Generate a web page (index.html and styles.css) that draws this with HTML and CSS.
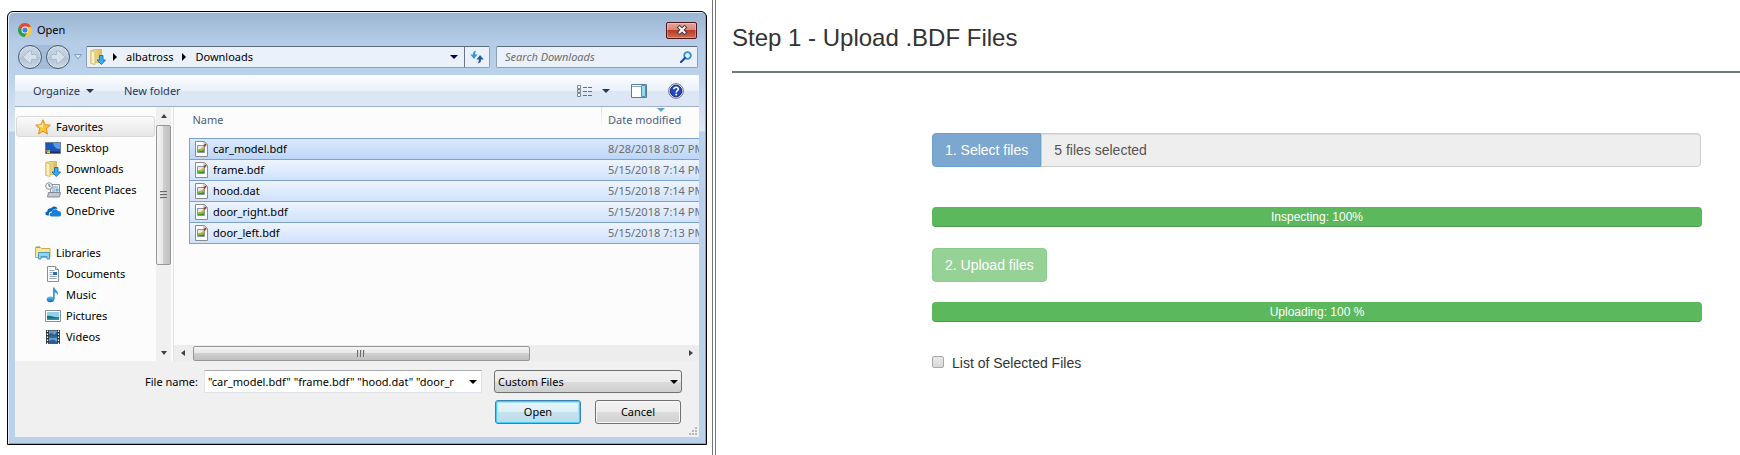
FILE: index.html
```html
<!DOCTYPE html>
<html lang="en">
<head>
  <meta charset="UTF-8">
  <meta name="viewport" content="width=device-width, initial-scale=1.0">
  <title>Upload .BDF Files</title>
  <link rel="stylesheet" href="styles.css">
</head>
<body>
  <!-- shared icons -->
  <svg class="sprite" aria-hidden="true">
    <defs>
      <linearGradient id="gold" x1="0" y1="0" x2="1" y2="0">
        <stop offset="0" stop-color="#f9ecab"/><stop offset="1" stop-color="#dcb95b"/>
      </linearGradient>
      <linearGradient id="sky" x1="0" y1="0" x2="0" y2="1">
        <stop offset="0" stop-color="#5cc4f7"/><stop offset="1" stop-color="#1469b5"/>
      </linearGradient>
      <symbol id="icon-downloads" viewBox="0 0 16 16">
        <path d="M1 1.5 5 .5h6.500v13H5l-4 1z" fill="url(#gold)" stroke="#d3b15a" stroke-width=".8"/>
        <path d="M1 1.500 5 3v12.500l-4-1z" fill="#fbf1bd" stroke="#d3b15a" stroke-width=".8"/>
        <path d="M9.500 6.500h3.500v4.500h2.500l-4.200 4.500L7 11h2.500z" fill="#36aef0" stroke="#176bb0" stroke-width=".9"/>
      </symbol>
      <symbol id="icon-file" viewBox="0 0 13 16">
        <path d="M.5.5h9l3 3v12H.5z" fill="#fdfdfd" stroke="#8b8b8b"/>
        <path d="M9 .5v3.500h3.500" fill="#e4e4e4" stroke="#9a9a9a" stroke-width=".8"/>
        <path d="M2.500 4.500h7v7h-7z" fill="#dfe9ee" stroke="#8796a0"/>
        <path d="M3 8.500 9 7v4H3z" fill="#6bbf3a"/>
        <path d="M3 11h6v-1.500l-4 .5z" fill="#2f8f2a"/>
        <path d="M5.500 9.500 10 5" stroke="#e9a824" stroke-width="1.500"/>
        <path d="M9 5.500 11 3" stroke="#a12a2a" stroke-width="1.500"/>
      </symbol>
      <symbol id="icon-down" viewBox="0 0 8 4"><path d="M0 0h8L4 4z" fill="currentColor"/></symbol>
    </defs>
  </svg>

  <div class="layout">
    <div class="dialog-pane">
      <section class="dialog" aria-label="Open">
        <header class="title-bar">
          <svg class="chrome" viewBox="0 0 14 14">
            <circle cx="7" cy="7" r="7" fill="#fbc935"/>
            <path d="M7 7 .9 3.500A7 7 0 0 0 6.500 14L10 8.700z" fill="#24a05a"/>
            <path d="M7 7 3.900 8.800.9 3.500A7 7 0 0 1 13.100 3.700H7z" fill="#de4b3c"/>
            <circle cx="7" cy="7" r="3.500" fill="#f4f6fa"/>
            <circle cx="7" cy="7" r="2.600" fill="#3f80ea"/>
          </svg>
          <span class="title-text">Open</span>
          <button class="close-button" aria-label="Close">
            <svg width="12" height="10" viewBox="0 0 12 10"><path d="M3.500 2.500l5 5M8.500 2.500l-5 5" stroke="#4c3a42" stroke-width="4" stroke-linecap="square"/><path d="M3.500 2.500l5 5M8.500 2.500l-5 5" stroke="#f5f5f5" stroke-width="2" stroke-linecap="square"/></svg>
          </button>
        </header>

        <div class="nav-bar">
          <div class="nav-buttons">
            <button class="round-button" aria-label="Back"><svg width="16" height="16" viewBox="0 0 16 16"><path d="M1 8l6-6h2.500v3.500H15v5H9.500V14H7z" fill="#d5e0ea" stroke="#a9bccf"/></svg></button>
            <button class="round-button" aria-label="Forward"><svg width="16" height="16" viewBox="0 0 16 16"><path d="M15 8 9 2H6.500v3.500H1v5h5.500V14H9z" fill="#d5e0ea" stroke="#a9bccf"/></svg></button>
          </div>
          <svg class="recent" viewBox="0 0 8 6"><path d="M.5.5h7L4 5z" fill="#dbe8f5" stroke="#7f9dbd"/></svg>
          <div class="address-bar">
            <svg class="icon address-icon"><use href="#icon-downloads"/></svg>
            <svg class="crumb-arrow" viewBox="0 0 4 8"><path d="M0 0l4 4-4 4z"/></svg>
            <button class="crumb">albatross</button>
            <svg class="crumb-arrow" viewBox="0 0 4 8"><path d="M0 0l4 4-4 4z"/></svg>
            <button class="crumb">Downloads</button>
            <button class="address-drop" aria-label="Previous locations"><svg class="caret"><use href="#icon-down"/></svg></button>
            <button class="refresh" aria-label="Refresh">
              <svg width="14" height="14" viewBox="0 0 14 14"><path d="M6 .8C3.800.8 3 2 3 4.500H.3L4 9l3.500-4.500H5.200c0-1.500 0-2.200.8-3.700z" fill="#2f9bdd"/><path d="M8 13.200c2.200 0 3-1.200 3-3.700h2.700L10 5 6.500 9.500h2.300c0 1.500 0 2.200-.8 3.700z" fill="#2456a8"/></svg>
            </button>
          </div>
          <div class="search-box">
            <input class="search-input" type="text" placeholder="Search Downloads" aria-label="Search Downloads">
            <svg width="12" height="12" viewBox="0 0 12 12"><circle cx="7.500" cy="4.500" r="3.300" fill="#e6f5fc" stroke="#2c8fd6" stroke-width="1.800"/><path d="M5 7l-4 4" stroke="#24459c" stroke-width="2.200" stroke-linecap="round"/></svg>
          </div>
        </div>

        <div class="tool-bar">
          <button class="tool-button organize">Organize <svg class="caret"><use href="#icon-down"/></svg></button>
          <button class="tool-button new-folder">New folder</button>
          <div class="tool-icons">
            <button class="tool-button views" aria-label="Change your view">
              <svg width="15" height="13" viewBox="0 0 15 13"><g fill="#fff" stroke="#72869c"><path d="M.5.5h3v3h-3zM.5 4.500h3v3h-3zM.5 8.500h3v3h-3z"/></g><path d="M1.500 5.500h1v1h-1z" fill="#c33"/><path d="M6 2.500h4M11 2.500h4M6 6.500h4M11 6.500h4M6 10.500h4M11 10.500h4" stroke="#5e748e"/></svg>
              <svg class="caret"><use href="#icon-down"/></svg>
            </button>
            <button class="tool-button" aria-label="Show the preview pane">
              <svg width="16" height="14" viewBox="0 0 16 14"><path d="M.5.5h15v13H.5z" fill="#fff" stroke="#5d7898"/><path d="M1 2.500h9" stroke="#8ca2b9"/><path d="M10.500 1.500h4v11h-4z" fill="#8fdcf0" stroke="#459bb6"/></svg>
            </button>
            <button class="tool-button" aria-label="Get help">
              <svg width="16" height="16" viewBox="0 0 16 16"><circle cx="8" cy="8" r="7.400" fill="#e3e6ec" stroke="#737987"/><circle cx="8" cy="8" r="5.800" fill="#2547bd" stroke="#183082"/><path d="M5.800 6.300C5.800 3.500 10.300 3.700 10.300 6.200 10.300 7.700 8.200 7.700 8.200 9.500" fill="none" stroke="#fff" stroke-width="1.600"/><circle cx="8.200" cy="11.500" r="1" fill="#fff"/></svg>
            </button>
          </div>
        </div>

        <div class="browser">
          <nav class="places">
            <ul class="place-group">
              <li class="place place-root current">
                <svg class="icon" viewBox="0 0 16 16"><path d="M8 .8l2.100 4.900 5.200.5-4 3.500 1.200 5.300L8 12.200 3.500 15l1.200-5.300-4-3.500 5.200-.5z" fill="#fcc82f" stroke="#e68a2a"/><path d="M8 3v6l-5-2.500 3.500-.3z" fill="#fff0a0"/></svg>Favorites</li>
              <li class="place">
                <svg class="icon" viewBox="0 0 16 16"><path d="M.5 2.500h15v11H.5z" fill="#1d55ba" stroke="#6d7f98"/><path d="M8 3h7v6C11 9 9 7 8 3z" fill="#5c9be8"/><path d="M1 11.500h14v1.500H1z" fill="#213050"/><path d="M1 10h2v2H1z" fill="#ec6236"/><path d="M3 10h2v2H3z" fill="#7ccc46"/><path d="M2 12h3v1H2z" fill="#f8d348"/></svg>Desktop</li>
              <li class="place"><svg class="icon"><use href="#icon-downloads"/></svg>Downloads</li>
              <li class="place">
                <svg class="icon" viewBox="0 0 16 16"><path d="M5.500 2.500h9v9h-9z" fill="#f0f4f7" stroke="#87939c"/><path d="M7 5h6M7 7h3M7 9h3" stroke="#8697a6"/><path d="M10.500 6.500h3v3h-3z" fill="#57b2df"/><path d="M3.500 10.500 2.500 15h12l1-4.500z" fill="#c3c8cc" stroke="#858b90"/><circle cx="4" cy="4" r="3.300" fill="#f5f8fa" stroke="#8a9298"/><path d="M4 2v2.200h1.600" fill="none" stroke="#486686"/></svg>Recent Places</li>
              <li class="place">
                <svg class="icon" viewBox="0 0 16 16"><path d="M4 12.500H2.500C-.2 12.300-.3 8.800 2.300 8.400 2.300 5.700 4.700 4.700 6.200 5.300 7.800 2.500 12 2.900 12.500 6 9.500 5 7.500 6.500 7 8.500 4.500 8.300 3.200 10.500 4 12.500z" fill="#0c63bb"/><path d="M6.300 13.500c-2.400-.4-2.300-3.800.5-4 .3-3.500 4.800-4.300 6.200-1.400 2.500-.1 3 .9 2.800 2.200.8 1 0 3-1.300 3.200z" fill="#1581dc"/></svg>OneDrive</li>
            </ul>
            <ul class="place-group">
              <li class="place place-root">
                <svg class="icon" viewBox="0 0 16 16"><path d="M.5 2.500h5l1 1h8.500v9H.5z" fill="#f8e795" stroke="#cba94d"/><path d="M1 2h4" stroke="#68a542"/><path d="M3.500 7.500h11v6.500h-2.500v-2.500H6V14H3.500z" fill="#8fd5f1" stroke="#4c9ac2"/></svg>Libraries</li>
              <li class="place">
                <svg class="icon" viewBox="0 0 16 16"><path d="M2.500.5h8l3 3v12h-11z" fill="#fff" stroke="#84909a"/><path d="M10.500.5v3h3" fill="#dde4e9" stroke="#84909a"/><path d="M4.500 4.500h5M4.500 6.500h3M4.500 8.500h3M4.500 10.500h7M4.500 12.500h7" stroke="#95a5bf"/><path d="M8 6h4v3H8z" fill="#276eb5"/></svg>Documents</li>
              <li class="place">
                <svg class="icon" viewBox="0 0 16 16"><ellipse cx="5.500" cy="12.300" rx="3.800" ry="2.900" fill="url(#sky)"/><path d="M8 12V.5h1.500c.3 2.500 4.500 3.500 3.500 8-.6-2-1.800-2.600-3.300-3V12z" fill="#3099dc"/></svg>Music</li>
              <li class="place">
                <svg class="icon" viewBox="0 0 16 16"><path d="M.5 2.500h15v11H.5z" fill="#fff" stroke="#888f97"/><path d="M2 4h12v8H2z" fill="#8fd2f0"/><path d="M2 8c4-1 7 2 12 1v3H2z" fill="#17716e"/><path d="M2 10.500h12V12H2z" fill="#2c93b4"/></svg>Pictures</li>
              <li class="place">
                <svg class="icon" viewBox="0 0 16 16"><path d="M1 1h14v14H1z" fill="#26333b"/><path d="M4 1.500h8v6H4zM4 8.500h8v6H4z" fill="#58a7dc"/><path d="M4 5l3-2 2 3 3-3v4.500H4zM4 12l4-2 4 3v1.500H4z" fill="#2c5c9c"/><path d="M6 2.500h3v2H6zM6 9.500h3v1.500H6z" fill="#b07f66"/><path d="M2.500 1.500v14M13.500 1.500v14" stroke="#fff" stroke-width="1.300" stroke-dasharray="1.500 1.500"/></svg>Videos</li>
            </ul>
          </nav>
          <div class="v-scroll">
            <svg class="arrow-v" viewBox="0 0 6 4"><path d="M3 0l3 4H0z"/></svg>
            <div class="v-thumb"><i></i><i></i><i></i></div>
            <svg class="arrow-v arrow-bottom" viewBox="0 0 6 4"><path d="M0 0h6L3 4z"/></svg>
          </div>

          <div class="files">
            <div class="file-view">
              <table class="file-table">
                <thead>
                  <tr><th>Name</th><th class="col-date">Date modified<svg class="sort-mark" viewBox="0 0 8 4"><path d="M0 0h8L4 4z"/></svg></th></tr>
                </thead>
                <tbody>
                  <tr class="focused"><td><div class="file-name"><svg class="file-icon"><use href="#icon-file"/></svg>car_model.bdf</div></td><td class="col-date">8/28/2018 8:07 PM</td></tr>
                  <tr><td><div class="file-name"><svg class="file-icon"><use href="#icon-file"/></svg>frame.bdf</div></td><td class="col-date">5/15/2018 7:14 PM</td></tr>
                  <tr><td><div class="file-name"><svg class="file-icon"><use href="#icon-file"/></svg>hood.dat</div></td><td class="col-date">5/15/2018 7:14 PM</td></tr>
                  <tr><td><div class="file-name"><svg class="file-icon"><use href="#icon-file"/></svg>door_right.bdf</div></td><td class="col-date">5/15/2018 7:14 PM</td></tr>
                  <tr><td><div class="file-name"><svg class="file-icon"><use href="#icon-file"/></svg>door_left.bdf</div></td><td class="col-date">5/15/2018 7:13 PM</td></tr>
                </tbody>
              </table>
            </div>
            <div class="h-scroll">
              <svg class="arrow-h" viewBox="0 0 4 6"><path d="M4 0v6L0 3z"/></svg>
              <div class="h-track"><div class="h-thumb"><i></i><i></i><i></i></div></div>
              <svg class="arrow-h" viewBox="0 0 4 6"><path d="M0 0v6l4-3z"/></svg>
            </div>
          </div>
        </div>

        <footer class="dialog-footer">
          <div class="footer-row">
            <label class="name-label" for="fileName">File name:</label>
            <div class="name-box">
              <input class="name-input" id="fileName" type="text" value='"car_model.bdf" "frame.bdf" "hood.dat" "door_r'>
              <svg class="caret"><use href="#icon-down"/></svg>
            </div>
            <div class="type-box">
              <select class="type-select" aria-label="File type"><option>Custom Files</option></select>
              <svg class="caret type-caret"><use href="#icon-down"/></svg>
            </div>
          </div>
          <div class="footer-row footer-buttons">
            <button class="win-button win-default">Open</button>
            <button class="win-button">Cancel</button>
          </div>
          <svg class="grip" viewBox="0 0 9 9"><path d="M7 1h2M4 4h2M7 4h2M1 7h2M4 7h2M7 7h2" stroke="#b8b8b8" stroke-width="2"/></svg>
        </footer>
      </section>
    </div>

    <main class="page">
      <h3 class="page-title">Step 1 - Upload .BDF Files</h3>
      <hr class="rule">
      <div class="upload-form">
        <div class="input-group">
          <button class="btn btn-select">1. Select files</button>
          <input class="form-control" type="text" value="5 files selected" aria-label="Selected files" readonly>
        </div>
        <div class="progress progress-inspect" role="progressbar" aria-valuenow="100">Inspecting: 100%</div>
        <button class="btn btn-upload">2. Upload files</button>
        <div class="progress" role="progressbar" aria-valuenow="100">Uploading: 100 %</div>
        <label class="check-line"><input class="check" type="checkbox">List of Selected Files</label>
      </div>
    </main>
  </div>
</body>
</html>
```
FILE: styles.css
```css
* {
  box-sizing: border-box;
}
body {
  margin: 0;
  background: #fff;
  font-family: "Liberation Sans", Arial, sans-serif;
  font-size: 14px;
  line-height: 20px;
  color: #333;
}
svg {
  display: block;
  flex-shrink: 0;
}
button,
input,
select {
  font: inherit;
  color: inherit;
  margin: 0;
}
.sprite {
  position: absolute;
  width: 0;
  height: 0;
}
.layout {
  display: grid;
  grid-template-columns: 178fr 257fr;
  min-height: 100vh;
}
.dialog-pane {
  padding: 11px 5px 10px 7px;
  min-width: 0;
}

/* dialog window */
.dialog {
  border: 1px solid #000;
  border-radius: 6px 6px 0 0;
  padding: 0 7px 7px;
  background: linear-gradient(#9ab4d1 0, #b4cce6 30px, #b9d1ea 60px, #dce8f5 119px, #b9d1ea 120px);
  box-shadow: inset 1px 1px 0 #e4eef8, inset -1px -1px 0 #35c5e0;
  font-family: "Noto Sans", "Open Sans", sans-serif;
  font-size: 11px;
  line-height: 16px;
  color: #000;
}
.dialog button {
  padding: 0;
  border: none;
  background: none;
}
.icon {
  width: 16px;
  height: 16px;
}
.caret {
  width: 8px;
  height: 4px;
}
.title-bar {
  display: flex;
  align-items: center;
  gap: 5px;
  height: 32px;
  padding: 4px 2px 0 3px;
}
.chrome {
  width: 14px;
  height: 14px;
}
.dialog .close-button {
  display: flex;
  align-items: center;
  justify-content: center;
  width: 31px;
  height: 17px;
  margin-left: auto;
  border: 1px solid #4b1620;
  border-radius: 2px;
  background: linear-gradient(#e5a599 0, #d98274 50%, #b73c25 50%, #cd6c50 100%);
  box-shadow: inset 0 0 0 1px rgba(255, 255, 255, 0.3);
}
.nav-bar {
  display: flex;
  align-items: center;
  gap: 4px;
  height: 26px;
  margin-bottom: 5px;
  padding: 0 1px 0 3px;
}
.nav-buttons {
  display: flex;
  gap: 4px;
  border-radius: 12px;
  background: #a3bcd7;
}
.dialog .round-button {
  display: flex;
  align-items: center;
  justify-content: center;
  width: 24px;
  height: 24px;
  border: 1px solid #4a5a6e;
  border-radius: 50%;
  background: linear-gradient(#cdd9e5 0, #bccada 50%, #b0c1d3 50%, #c9d8e7 100%);
  box-shadow: inset 0 0 0 1px #d2dfec;
}
.recent {
  width: 8px;
  height: 6px;
}
.address-bar,
.search-box {
  display: flex;
  align-items: center;
  height: 22px;
  border: 1px solid #8ea0b4;
  border-top-color: #5c6b7c;
  border-radius: 2px;
  background: #eaf1fa;
}
.address-bar {
  flex: 1;
  padding-left: 3px;
}
.address-icon {
  margin-right: 7px;
}
.crumb-arrow {
  width: 4px;
  height: 8px;
}
.dialog .crumb {
  margin: 0 9px;
}
.address-drop {
  margin-left: auto;
  margin-right: 6px;
  color: #00005c;
}
.dialog .refresh {
  display: flex;
  align-items: center;
  justify-content: center;
  width: 25px;
  height: 20px;
  border-left: 1px solid #66778a;
}
.search-box {
  flex: 0 0 202px;
  margin-left: 2px;
  padding: 0 5px 0 8px;
}
.search-input {
  flex: 1;
  min-width: 0;
  padding: 0;
  border: none;
  background: none;
  font-style: italic;
}
.search-input::placeholder {
  color: #6d6d6d;
}
.tool-bar {
  display: flex;
  align-items: center;
  height: 32px;
  padding: 0 15px 0 18px;
  border-top: 1px solid #f4f8fd;
  border-bottom: 1px solid #a0afc3;
  background: linear-gradient(#fbfdff 0, #e8f0fa 50%, #dce7f5 50%, #dce6f4 100%);
  color: #1e395b;
}
.dialog .tool-button {
  display: flex;
  align-items: center;
  gap: 6px;
}
.dialog .new-folder {
  margin-left: 30px;
}
.tool-icons {
  display: flex;
  align-items: center;
  gap: 21px;
  margin-left: auto;
}
.dialog .views {
  gap: 10px;
}

/* folder tree */
.browser {
  display: flex;
  height: 254px;
  background: #fcfcfc;
}
.places {
  flex: 0 0 141px;
  padding: 9px 1px 0;
}
.place-group {
  list-style: none;
  margin: 0 0 21px;
  padding: 0;
}
.place {
  display: flex;
  align-items: center;
  gap: 5px;
  height: 21px;
  padding-left: 29px;
  white-space: nowrap;
}
.place-root {
  padding-left: 19px;
}
.current {
  border: 1px solid #d9d9d9;
  border-radius: 3px;
  background: linear-gradient(#fafafa, #e6e6e6);
  padding-left: 18px;
}

/* scroll bars */
.v-scroll {
  display: flex;
  flex-direction: column;
  align-items: center;
  flex: 0 0 15px;
  margin-right: 1px;
  padding: 7px 0 6px;
  background: #f0f0f0;
}
.arrow-v {
  width: 6px;
  height: 4px;
  fill: #404040;
}
.arrow-bottom {
  margin-top: auto;
}
.v-thumb,
.h-thumb {
  display: flex;
  align-items: center;
  justify-content: center;
  border: 1px solid #979797;
  border-radius: 2px;
}
.v-thumb {
  flex-direction: column;
  gap: 1px;
  width: 15px;
  height: 140px;
  margin-top: 7px;
  background: linear-gradient(90deg, #f5f5f5 0, #e6e6e6 50%, #cfcfcf 50%, #c0c0c4 100%);
}
.v-thumb i {
  width: 7px;
  height: 2px;
  background: #6b6b6b;
  border-bottom: 1px solid #d0d0d0;
}
.h-scroll {
  display: flex;
  align-items: center;
  height: 16px;
  padding: 0 6px 0 7px;
  background: #ededed;
}
.arrow-h {
  width: 4px;
  height: 6px;
  fill: #404040;
}
.h-track {
  flex: 1;
  padding: 0 8px;
}
.h-thumb {
  gap: 1px;
  width: 69%;
  height: 15px;
  background: linear-gradient(#f5f5f5 0, #e6e6e6 50%, #cfcfcf 50%, #c0c0c4 100%);
}
.h-thumb i {
  width: 2px;
  height: 7px;
  background: #6b6b6b;
  border-right: 1px solid #d0d0d0;
}

/* file list */
.files {
  display: flex;
  flex-direction: column;
  flex: 1;
  min-width: 0;
  margin-left: 1px;
  border-left: 1px solid #d6e5f5;
}
.file-view {
  flex: 1;
  padding-left: 15px;
  overflow: hidden;
}
.file-table {
  width: 100%;
  table-layout: fixed;
  border-collapse: collapse;
}
.file-table th {
  height: 31px;
  padding: 0 0 5px 3px;
  font-weight: normal;
  text-align: left;
  white-space: nowrap;
  color: #4c607a;
}
.file-table td {
  height: 21px;
  padding: 0;
  border-top: 1px solid #7da2ce;
  border-bottom: 1px solid #7da2ce;
  white-space: nowrap;
}
.file-table td:first-child {
  border-left: 1px solid #7da2ce;
}
.file-table tbody tr {
  background: linear-gradient(#eff5fe, #cfe2fc);
}
.file-table tbody .focused {
  background: linear-gradient(#dceafc, #bcd6f9);
}
.file-table .col-date {
  width: 98px;
  padding-left: 7px;
}
.file-table td.col-date {
  color: #6d6d6d;
}
.file-table th.col-date {
  position: relative;
  background: linear-gradient(#d5e3f2, #fcfcfc) left top / 1px 22px no-repeat;
}
.sort-mark {
  position: absolute;
  top: 1px;
  left: 56px;
  width: 8px;
  height: 4px;
  fill: #5fa5c4;
}
.file-name {
  display: flex;
  align-items: center;
  gap: 5px;
  padding-left: 5px;
}
.file-icon {
  width: 13px;
  height: 16px;
}

/* footer */
.dialog-footer {
  position: relative;
  height: 76px;
  padding: 9px 17px 0 130px;
  background: #f0f0f0;
}
.footer-row {
  display: flex;
  align-items: center;
}
.name-label {
  flex: 0 0 59px;
  white-space: nowrap;
}
.name-box {
  display: flex;
  align-items: center;
  flex: 1;
  height: 23px;
  padding: 0 4px 0 3px;
  border: 1px solid #e2e3ea;
  border-top-color: #abadb3;
  background: #fff;
}
.name-input {
  flex: 1;
  min-width: 0;
  padding: 0;
  border: none;
  background: none;
}
.type-box {
  position: relative;
  flex: 0 0 188px;
  margin-left: 12px;
}
.type-select {
  display: block;
  appearance: none;
  width: 100%;
  height: 23px;
  padding: 0 20px 0 3px;
  border: 1px solid #707070;
  border-radius: 3px;
  background: linear-gradient(#f2f2f2 0, #ebebeb 50%, #dddddd 50%, #cfcfcf 100%);
}
.type-caret {
  position: absolute;
  top: 10px;
  right: 4px;
  pointer-events: none;
}
.footer-buttons {
  justify-content: flex-end;
  gap: 14px;
  padding-right: 1px;
  margin-top: 7px;
}
.dialog .win-button {
  width: 86px;
  height: 24px;
  border: 1px solid #707070;
  border-radius: 3px;
  background: linear-gradient(#f2f2f2 0, #ebebeb 50%, #dddddd 50%, #cfcfcf 100%);
  box-shadow: inset 0 0 0 1px #f8f8f8;
}
.dialog .win-default {
  border-color: #3c7fb1;
  background: linear-gradient(#eaf6fc 0, #dceff7 50%, #c6e2ee 50%, #bcdcea 100%);
  box-shadow: inset 0 0 0 1px #3fd0fb, inset 0 0 0 2px #a5e4fa;
}
.grip {
  position: absolute;
  right: 2px;
  bottom: 1px;
  width: 9px;
  height: 9px;
}

/* upload page */
.page {
  min-width: 0;
  padding: 25px 0 20px 16px;
  border-left: 4px double #777;
}
.page-title {
  margin: 0 0 20px;
  font-size: 24px;
  font-weight: normal;
  line-height: 26px;
}
.rule {
  margin: 0;
  border: none;
  border-top: 2px solid #6f7a74;
}
.upload-form {
  margin: 60px 38px 0 200px;
}
.input-group {
  display: flex;
  margin-right: 1px;
}
.btn {
  height: 34px;
  padding: 0 12px;
  border: 1px solid;
  border-radius: 4px;
  color: #fff;
}
.btn-select {
  border-color: #6d9fcb;
  border-radius: 4px 0 0 4px;
  background: #7ba7d0;
}
.form-control {
  flex: 1;
  min-width: 0;
  height: 34px;
  padding: 0 12px;
  border: 1px solid #ccc;
  border-radius: 0 4px 4px 0;
  background: #eee;
  box-shadow: inset 0 1px 1px rgba(0, 0, 0, 0.075);
  color: #555;
}
.progress {
  height: 20px;
  border-radius: 4px;
  background: #5cb85c;
  box-shadow: inset 0 -1px 0 rgba(0, 0, 0, 0.15);
  font-size: 12px;
  text-align: center;
  color: #fff;
}
.progress-inspect {
  margin-top: 40px;
}
.btn-upload {
  display: block;
  margin: 21px 0 20px;
  border-color: #8bcb8b;
  background: #96d196;
}
.check-line {
  display: flex;
  align-items: center;
  gap: 8px;
  margin-top: 31px;
}
.check {
  appearance: none;
  width: 12px;
  height: 12px;
  margin-bottom: 3px;
  border: 1px solid #a9a9a9;
  border-radius: 2px;
  background: linear-gradient(#e9e9e9, #d9d9d9);
}
```
